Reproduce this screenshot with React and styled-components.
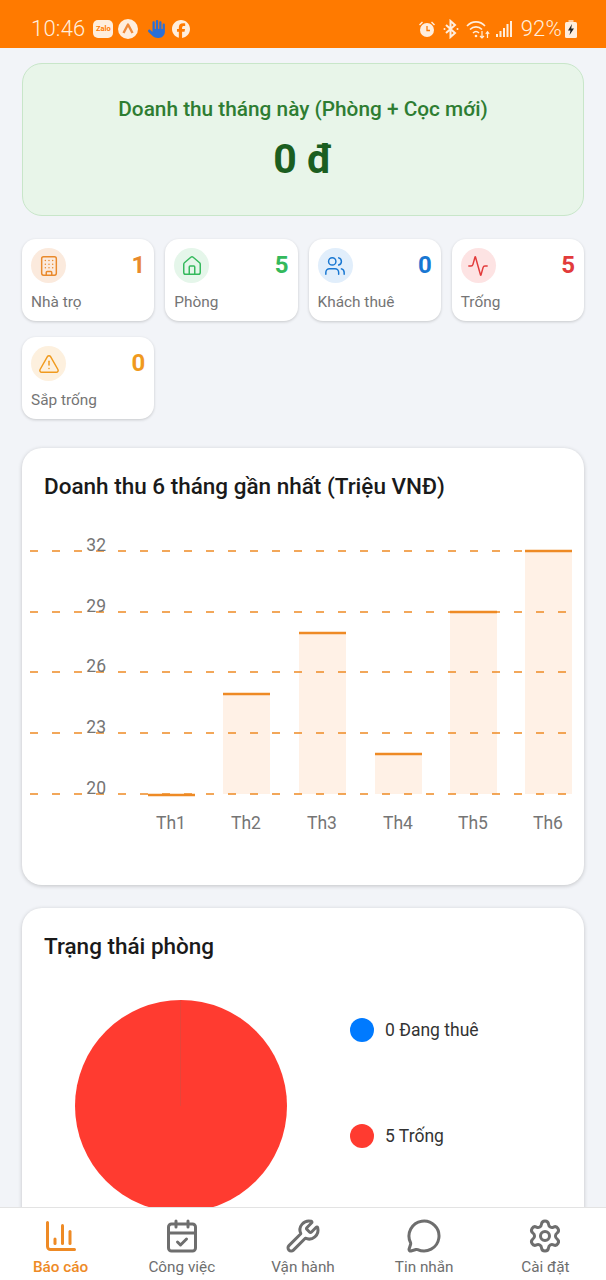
import React from 'react';
import styled, { createGlobalStyle } from 'styled-components';
import {
  Building, House, Users, Activity, TriangleAlert,
  ChartColumn, CalendarCheck, Wrench, MessageCircle, Settings,
} from 'lucide-react';
import { FaFacebook, FaHand } from 'react-icons/fa6';

const GlobalStyle = createGlobalStyle`
  html, body { margin: 0; padding: 0; height: 100%; }
  body { font-family: Roboto, "Noto Sans", sans-serif; background: #f2f4f8; }
  * { box-sizing: border-box; }
`;

const Screen = styled.div`
  width: 606px;
  height: 1280px;
  display: flex;
  flex-direction: column;
  overflow: hidden;
  background: #f2f4f8;
`;

const StatusBar = styled.div`
  height: 48px;
  flex: none;
  background: #ff7a00;
  color: #ffeedd;
  display: flex;
  align-items: center;
  justify-content: space-between;
  padding: 9px 29px 0 31px;
`;

const StatusGroup = styled.div`
  display: flex;
  align-items: center;
  gap: ${props => props.gap || 4}px;
`;

const StatusText = styled.span`
  font-size: 22px;
  font-weight: 300;
  letter-spacing: 0.2px;
  margin-right: ${props => props.mr || 0}px;
  margin-left: ${props => props.ml || 0}px;
`;

const ZaloBadge = styled.span`
  width: 20px;
  height: 18px;
  border-radius: 5px;
  background: #ffeedd;
  color: #ff7a00;
  font-size: 7.5px;
  font-weight: 700;
  display: flex;
  align-items: center;
  justify-content: center;
`;

const HandSlot = styled.span`
  display: flex;
  margin: 0 1px 0 5px;
`;

const Content = styled.main`
  flex: 1;
  min-height: 0;
  overflow: hidden;
  padding: 15px 22px 0;
  display: flex;
  flex-direction: column;
`;

const Hero = styled.section`
  flex: none;
  height: 153px;
  background: #e8f5e9;
  border: 1px solid #c8e6c9;
  border-radius: 20px;
  display: flex;
  flex-direction: column;
  align-items: center;
  padding-top: 32px;
`;

const HeroLabel = styled.div`
  font-size: 20.8px;
  font-weight: 500;
  line-height: 26px;
  color: #2e7d32;
`;

const HeroValue = styled.div`
  font-size: 41px;
  font-weight: 700;
  line-height: 46px;
  margin-top: 14px;
  color: #1b5e20;
`;

const StatGrid = styled.section`
  flex: none;
  margin-top: 23px;
  display: grid;
  grid-template-columns: repeat(4, 132.25px);
  column-gap: 11px;
  row-gap: 16px;
`;

const StatCard = styled.div`
  height: 82px;
  background: #fff;
  border-radius: 14px;
  box-shadow: 0 1px 3px rgba(0, 0, 0, 0.18);
  padding: 9px 9px 0 9px;
`;

const StatTop = styled.div`
  display: flex;
  align-items: center;
  justify-content: space-between;
`;

const StatIcon = styled.div`
  width: 35px;
  height: 35px;
  border-radius: 50%;
  background: ${props => props.bg};
  color: ${props => props.color};
  display: flex;
  align-items: center;
  justify-content: center;
`;

const StatValue = styled.div`
  font-size: 24px;
  font-weight: 700;
  color: ${props => props.color};
  margin-top: -1px;
`;

const StatLabel = styled.div`
  font-size: 15.4px;
  line-height: 20px;
  color: #757575;
  margin-top: 9px;
`;

const Panel = styled.section`
  flex: none;
  background: #fff;
  border-radius: 20px;
  box-shadow: 0 1px 4px rgba(0, 0, 0, 0.2);
  margin-top: ${props => props.mt}px;
  height: ${props => props.h}px;
`;

const PanelTitle = styled.h2`
  margin: 0;
  padding: 24px 22px 0;
  font-size: 22.5px;
  line-height: 28px;
  font-weight: 500;
  color: #1a1a1a;
`;

const ChartSvg = styled.svg`
  display: block;
  margin-top: 35px;
`;

const AxisText = styled.text`
  font-family: Roboto, sans-serif;
  font-size: 17.5px;
  fill: #757575;
`;

const PieRow = styled.div`
  display: flex;
  padding: 40px 0 0 53px;
`;

const Legend = styled.div`
  margin-left: 63px;
  padding-top: 18px;
  display: flex;
  flex-direction: column;
  gap: 82px;
`;

const LegendItem = styled.div`
  display: flex;
  align-items: center;
  gap: 11px;
  font-size: 17.5px;
  line-height: 24px;
  color: #333;
`;

const LegendDot = styled.span`
  width: 24px;
  height: 24px;
  border-radius: 50%;
  background: ${props => props.color};
`;

const TabBar = styled.nav`
  flex: none;
  height: 73px;
  background: #fff;
  border-top: 1px solid #e3e3e3;
  display: grid;
  grid-template-columns: repeat(5, 1fr);
`;

const Tab = styled.div`
  display: flex;
  flex-direction: column;
  align-items: center;
  padding-top: 10px;
  color: ${props => (props.active ? '#ee8a25' : '#6e6e6e')};
`;

const TabLabel = styled.span`
  font-size: 15.3px;
  line-height: 20px;
  margin-top: 3px;
  font-weight: ${props => (props.active ? 500 : 400)};
`;

const stats = [
  { label: 'Nhà trọ', value: 1, Icon: Building, color: '#e98a2c', bg: '#fbeadd' },
  { label: 'Phòng', value: 5, Icon: House, color: '#34b95c', bg: '#e5f6ea' },
  { label: 'Khách thuê', value: 0, Icon: Users, color: '#1877d2', bg: '#e1eefb' },
  { label: 'Trống', value: 5, Icon: Activity, color: '#e23b3b', bg: '#fde3e3' },
  { label: 'Sắp trống', value: 0, Icon: TriangleAlert, color: '#f09a1e', bg: '#fdf0de' },
];

const tabs = [
  { label: 'Báo cáo', Icon: ChartColumn, active: true },
  { label: 'Công việc', Icon: CalendarCheck },
  { label: 'Vận hành', Icon: Wrench },
  { label: 'Tin nhắn', Icon: MessageCircle },
  { label: 'Cài đặt', Icon: Settings },
];

const gridLines = [
  { label: 32, y: 16 },
  { label: 29, y: 77 },
  { label: 26, y: 137 },
  { label: 23, y: 198 },
  { label: 20, y: 259 },
];

const bars = [
  { label: 'Th1', x: 126, top: 260 },
  { label: 'Th2', x: 201, top: 159 },
  { label: 'Th3', x: 277, top: 98 },
  { label: 'Th4', x: 353, top: 219 },
  { label: 'Th5', x: 428, top: 77 },
  { label: 'Th6', x: 503, top: 16 },
];

const RevenueChart = () => (
  <ChartSvg width="562" height="310" viewBox="0 0 562 310">
    {bars.map(b => (
      <g key={b.label}>
        <rect x={b.x} y={b.top} width="47" height={Math.max(259 - b.top, 0)} fill="#fff1e6" />
        <line x1={b.x} x2={b.x + 47} y1={b.top} y2={b.top} stroke="#ee8a25" strokeWidth="2.5" />
        <AxisText x={b.x + 23} y="294" textAnchor="middle">{b.label}</AxisText>
      </g>
    ))}
    {gridLines.map(g => (
      <g key={g.label}>
        <line x1="8" x2="550" y1={g.y} y2={g.y} stroke="#ee8a25" strokeWidth="1.4" strokeDasharray="8 14" />
        <AxisText x="84" y={g.y} textAnchor="end">{g.label}</AxisText>
      </g>
    ))}
  </ChartSvg>
);

const AppIcon = () => (
  <svg width="20" height="20" viewBox="0 0 20 20">
    <circle cx="10" cy="10" r="10" fill="#ffeedd" />
    <path d="M5.500 14 10 5.500 14.500 14" fill="none" stroke="#ef8a3a" strokeWidth="2.400" strokeLinejoin="round" />
  </svg>
);

const AlarmIcon = () => (
  <svg width="18" height="18" viewBox="0 0 18 18" fill="#ffeedd">
    <circle cx="9" cy="10" r="7" />
    <path d="M1 4.500 4 1.500 5 2.500 2 5.500ZM17 4.500 14 1.500 13 2.500 16 5.500Z" />
    <path d="M9 6v4.500h3" fill="none" stroke="#ff7a00" strokeWidth="1.300" />
  </svg>
);

const BluetoothIcon = () => (
  <svg width="18" height="20" viewBox="0 0 18 20" fill="none" stroke="#ffeedd" strokeWidth="2">
    <path d="M4 6l9 8-4.500 4V2L13 6 4 14" />
    <circle cx="2.500" cy="10" r="1" fill="#ffeedd" stroke="none" />
    <circle cx="15.500" cy="10" r="1" fill="#ffeedd" stroke="none" />
  </svg>
);

const WifiIcon = () => (
  <svg width="24" height="20" viewBox="0 0 24 20" fill="none" stroke="#ffeedd" strokeWidth="1.600">
    <path d="M1 7c5-5.500 13-5.500 18 0M4 10.500c3.500-3.500 8.500-3.500 12 0M7 14c2-2 4-2 6 0" />
    <circle cx="10" cy="17" r="1.300" fill="#ffeedd" stroke="none" />
    <path d="M16 12v7M14 17l2 2 2-2M21.500 19v-6M19.800 14.800l1.700-2 1.700 2" strokeWidth="1.200" />
  </svg>
);

const SignalIcon = () => (
  <svg width="16" height="18" viewBox="0 0 16 18" fill="#ffeedd">
    <rect x="0" y="14" width="2" height="3" />
    <rect x="3.500" y="11" width="2" height="6" />
    <rect x="7" y="8" width="2" height="9" />
    <rect x="10.500" y="4" width="2" height="13" />
    <rect x="14" y="1" width="2" height="16" />
  </svg>
);

const BatteryIcon = () => (
  <svg width="12" height="18" viewBox="0 0 12 18">
    <rect x="3.500" y="0" width="5" height="2" fill="#ffeedd" opacity="0.7" />
    <rect x="0" y="2" width="12" height="16" rx="1.500" fill="#ffeedd" />
    <path d="M7 4 3 10.500h2.500L4.500 15 9 8.500H6.200Z" fill="#222" />
  </svg>
);

const App = () => (
  <Screen>
    <GlobalStyle />
    <StatusBar>
      <StatusGroup gap={5}>
        <StatusText mr={3}>10:46</StatusText>
        <ZaloBadge>Zalo</ZaloBadge>
        <AppIcon />
        <HandSlot><FaHand size={18} color="#2a6fd6" /></HandSlot>
        <FaFacebook size={18} color="#ffeedd" />
      </StatusGroup>
      <StatusGroup gap={6}>
        <AlarmIcon />
        <BluetoothIcon />
        <WifiIcon />
        <SignalIcon />
        <StatusText ml={3} mr={-3}>92%</StatusText>
        <BatteryIcon />
      </StatusGroup>
    </StatusBar>

    <Content>
      <Hero>
        <HeroLabel>Doanh thu tháng này (Phòng + Cọc mới)</HeroLabel>
        <HeroValue>0 đ</HeroValue>
      </Hero>

      <StatGrid>
        {stats.map(({ label, value, Icon, color, bg }) => (
          <StatCard key={label}>
            <StatTop>
              <StatIcon bg={bg} color={color}><Icon size={22} strokeWidth={1.6} /></StatIcon>
              <StatValue color={color}>{value}</StatValue>
            </StatTop>
            <StatLabel>{label}</StatLabel>
          </StatCard>
        ))}
      </StatGrid>

      <Panel mt={29} h={437}>
        <PanelTitle>Doanh thu 6 tháng gần nhất (Triệu VNĐ)</PanelTitle>
        <RevenueChart />
      </Panel>

      <Panel mt={23} h={420}>
        <PanelTitle>Trạng thái phòng</PanelTitle>
        <PieRow>
          <svg width="212" height="212" viewBox="0 0 212 212">
            <circle cx="106" cy="106" r="106" fill="#ff3b30" />
            <line x1="105.500" y1="0" x2="105.500" y2="106" stroke="#e5453a" strokeWidth="1" />
          </svg>
          <Legend>
            <LegendItem><LegendDot color="#007aff" />0 Đang thuê</LegendItem>
            <LegendItem><LegendDot color="#ff3b30" />5 Trống</LegendItem>
          </Legend>
        </PieRow>
      </Panel>
    </Content>

    <TabBar>
      {tabs.map(({ label, Icon, active }) => (
        <Tab key={label} active={active}>
          <Icon size={36} strokeWidth={2} />
          <TabLabel active={active}>{label}</TabLabel>
        </Tab>
      ))}
    </TabBar>
  </Screen>
);

export default App;
